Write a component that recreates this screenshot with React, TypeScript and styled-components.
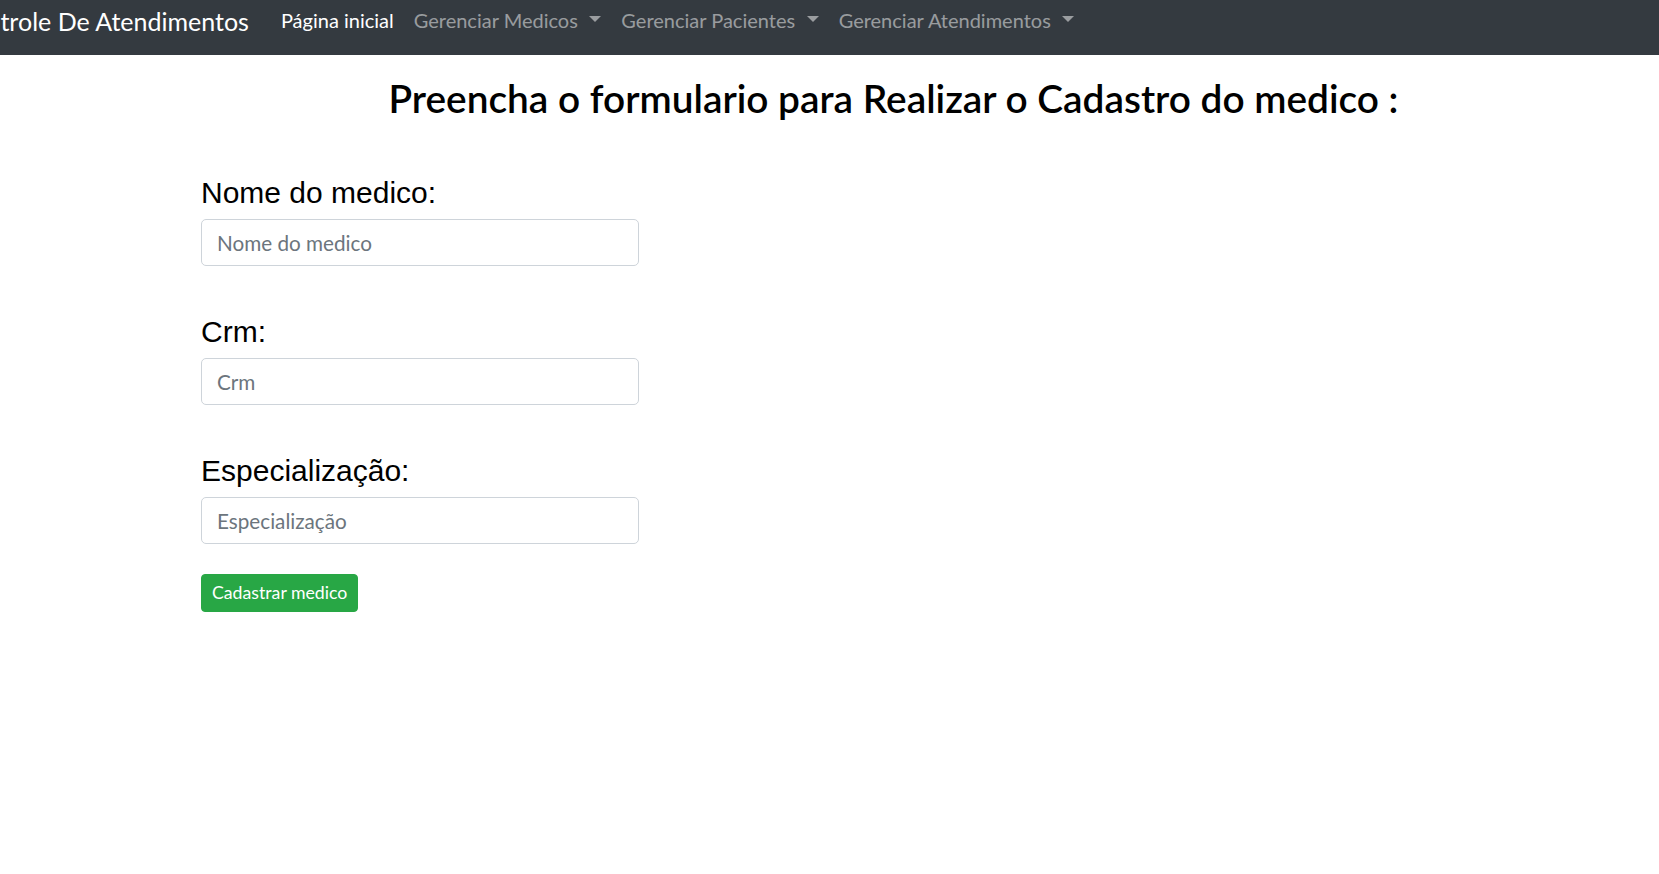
import React from "react";
import styled, { createGlobalStyle } from "styled-components";

const GlobalStyle = createGlobalStyle`
  html, body {
    margin: 0;
    padding: 0;
    background: #ffffff;
  }
  body {
    font-family: Lato, "Open Sans", sans-serif;
    color: #212529;
  }
  * { box-sizing: border-box; }
`;

const Navbar = styled.nav`
  height: 55px;
  background: #343a40;
  display: flex;
  align-items: flex-start;
  padding-top: 6px;
  overflow: hidden;
  white-space: nowrap;
`;

const Brand = styled.a`
  font-family: Lato, sans-serif;
  font-size: 25px;
  line-height: 30px;
  color: #ffffff;
  text-decoration: none;
  margin-left: -44px;
  margin-right: 22px;
`;

const NavList = styled.ul`
  display: flex;
  list-style: none;
  margin: 0;
  padding: 0;
`;

const NavLink = styled.a<{ $active?: boolean; $dropdown?: boolean }>`
  display: block;
  padding: 2px 10px 0;
  font-size: 20px;
  line-height: 24px;
  color: ${(p) => (p.$active ? "#ffffff" : "rgba(255, 255, 255, 0.5)")};
  text-decoration: none;
  cursor: pointer;

  ${(p) =>
    p.$dropdown
      ? `
    &::after {
      content: "";
      display: inline-block;
      margin-left: 11.5px;
      vertical-align: 6px;
      border-top: 6px solid currentColor;
      border-left: 6px solid transparent;
      border-right: 6px solid transparent;
      border-bottom: 0;
    }
  `
      : ""}
`;

const Main = styled.main`
  display: flex;
  flex-direction: column;
`;

const Title = styled.h1`
  margin: 19px 0 0;
  padding-left: 128px;
  text-align: center;
  font-family: Lato, sans-serif;
  font-weight: 600;
  font-size: 38.8px;
  line-height: 48px;
  color: #000000;
`;

const Form = styled.form`
  margin-top: 54px;
  padding-left: 201px;
  display: flex;
  flex-direction: column;
  align-items: flex-start;
`;

const Group = styled.div`
  display: flex;
  flex-direction: column;
  & + & {
    margin-top: 49px;
  }
`;

const Label = styled.label`
  font-family: "Liberation Sans", Arial, sans-serif;
  font-size: 30px;
  line-height: 33px;
  color: #000000;
  margin-bottom: 10px;
`;

const Input = styled.input`
  width: 438px;
  height: 47px;
  padding: 0 15px;
  font-family: Lato, sans-serif;
  font-size: 20.7px;
  color: #495057;
  background: #ffffff;
  border: 1px solid #ced4da;
  border-radius: 5px;
  outline: none;

  &::placeholder {
    color: #6c757d;
    opacity: 1;
  }
`;

const SubmitButton = styled.button`
  margin-top: 30px;
  height: 38px;
  padding: 0 10px;
  font-family: Lato, sans-serif;
  font-size: 17.7px;
  line-height: 36px;
  color: #ffffff;
  background: #28a745;
  border: 1px solid #28a745;
  border-radius: 4px;
  cursor: pointer;
`;

export default function App() {
  return (
    <>
      <GlobalStyle />
      <Navbar>
        <Brand href="#">Controle De Atendimentos</Brand>
        <NavList>
          <li>
            <NavLink $active>Página inicial</NavLink>
          </li>
          <li>
            <NavLink $dropdown>Gerenciar Medicos</NavLink>
          </li>
          <li>
            <NavLink $dropdown>Gerenciar Pacientes</NavLink>
          </li>
          <li>
            <NavLink $dropdown>Gerenciar Atendimentos</NavLink>
          </li>
        </NavList>
      </Navbar>
      <Main>
        <Title>Preencha o formulario para Realizar o Cadastro do medico :</Title>
        <Form onSubmit={(e) => e.preventDefault()}>
          <Group>
            <Label htmlFor="nome">Nome do medico:</Label>
            <Input id="nome" type="text" placeholder="Nome do medico" />
          </Group>
          <Group>
            <Label htmlFor="crm">Crm:</Label>
            <Input id="crm" type="text" placeholder="Crm" />
          </Group>
          <Group>
            <Label htmlFor="esp">Especialização:</Label>
            <Input id="esp" type="text" placeholder="Especialização" />
          </Group>
          <SubmitButton type="submit">Cadastrar medico</SubmitButton>
        </Form>
      </Main>
    </>
  );
}
